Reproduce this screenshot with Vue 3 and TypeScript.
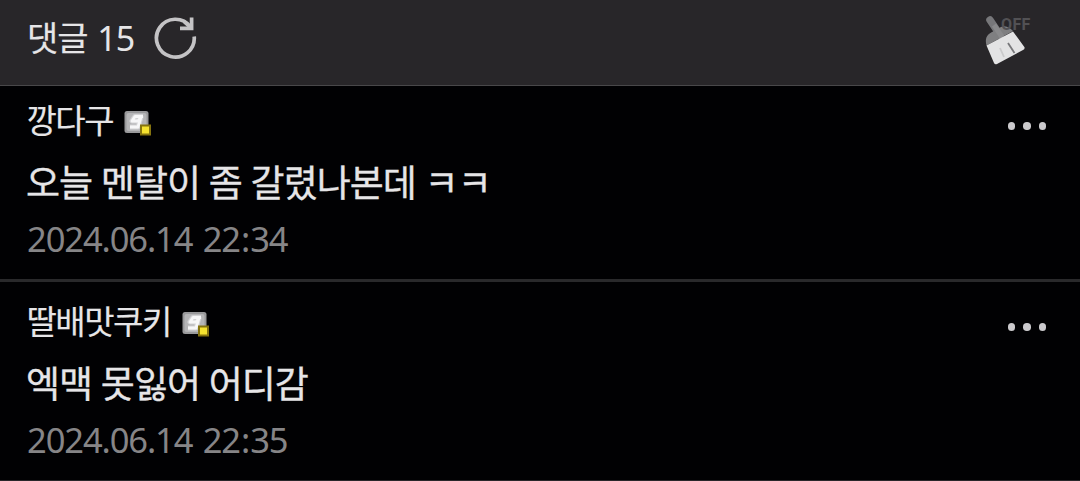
<script setup lang="ts">
interface Comment {
  id: number
  author: string
  text: string
  day: string
  hour: string
  minute: string
}

const comments: Comment[] = [
  { id: 1, author: '깡다구', text: '오늘 멘탈이 좀 갈렸나본데 ㅋㅋ', day: '2024.06.14', hour: '22', minute: '34' },
  { id: 2, author: '딸배맛쿠키', text: '엑맥 못잃어 어디감', day: '2024.06.14', hour: '22', minute: '35' },
]
</script>

<template>
  <main class="page">
    <header class="head">
      <h1 class="title">댓글 <span class="count">15</span></h1>
      <button class="icon-button refresh" aria-label="새로고침">
        <svg width="44" height="44" viewBox="0 0 44 44" fill="none" stroke="#c4c3c5" stroke-width="3.7">
          <path d="M40.2 20.5A18.9 18.9 0 1 1 36.5 10.8" />
          <path d="M37.6 1.5V12.4H26" />
          <path d="M30 5.5L37 12" />
        </svg>
      </button>
      <button class="icon-button clean" aria-label="클린">
        <svg width="52" height="54" viewBox="0 0 52 54">
          <path d="M8 9L18 24" stroke="#77777a" stroke-width="7.5" stroke-linecap="round" />
          <path d="M4.5 34.5C3 28 4 24 10 21L19 16C24 14 28 17 31 20Z" fill="#7f7f81" />
          <path d="M12 14L20 26" stroke="#89898b" stroke-width="5" />
          <path d="M4.5 34.5L31 20.5L42.5 36.2Q43 38 41 39L15 53Q13 54 12 52Z" fill="#e3e3e4" />
          <path d="M26 32L32.5 42" stroke="#77777a" stroke-width="1.8" />
          <path d="M18 37L22 46" stroke="#cacacb" stroke-width="1.8" />
          <text x="19" y="19" class="off">OFF</text>
        </svg>
      </button>
    </header>
    <article v-for="c in comments" :key="c.id" class="comment">
      <div class="body">
        <div class="author">
          <span>{{ c.author }}</span>
          <svg class="badge" width="30" height="28" viewBox="0 0 30 28">
            <rect x="1.5" y="2" width="24" height="22" rx="2.5" fill="#99999b" />
            <rect x="3.5" y="4" width="20" height="18" rx="2" fill="#b5b5b7" />
            <g fill="none" stroke-linejoin="round">
              <path d="M20 7.5H12L9 12H15L18 8L15 18H7" stroke="#d2d2d4" stroke-width="5" />
              <path d="M20 7.5H12L9 12H15L18 8L15 18H7" stroke="#f7f7f8" stroke-width="2.8" />
            </g>
            <rect x="17" y="15.5" width="11" height="11" fill="#85730f" />
            <rect x="19" y="17.5" width="7" height="7" fill="#f5e22f" />
          </svg>
        </div>
        <p class="text">{{ c.text }}</p>
        <time class="date">{{ c.day }} {{ c.hour }}<span class="colon">:</span>{{ c.minute }}</time>
      </div>
      <button class="icon-button more" aria-label="더보기">
        <i /><i /><i />
      </button>
    </article>
  </main>
</template>

<style>
body {
  margin: 0;
  background: #010103;
}
</style>

<style scoped>
.page {
  box-sizing: border-box;
  width: 1080px;
  height: 481px;
  overflow: hidden;
  background: #010103;
  border-bottom: 1px solid #29272a;
  color: #e6e5e7;
  font-family: "Noto Sans CJK KR", sans-serif;
}
.head {
  box-sizing: border-box;
  height: 86px;
  display: flex;
  align-items: flex-start;
  padding-left: 27px;
  background: #282629;
  border-bottom: 1px solid #49484a;
}
.title {
  margin: 17px 0 0;
  width: 127px;
  font-size: 34px;
  line-height: 40px;
  font-weight: 400;
  letter-spacing: -1px;
  word-spacing: 3px;
  white-space: nowrap;
  -webkit-text-stroke: 0.15px currentColor;
}
.count {
  font-family: "Noto Sans", sans-serif;
  -webkit-text-stroke: 0;
}
.icon-button {
  display: block;
  padding: 0;
  border: 0;
  background: none;
}
.icon-button svg {
  display: block;
}
.refresh {
  margin-top: 16px;
}
.clean {
  margin: 11px 46px 0 auto;
}
.off {
  font: bold 16px Roboto, sans-serif;
  letter-spacing: 0.4px;
  fill: #525154;
}
.comment {
  display: flex;
  justify-content: space-between;
  height: 193px;
  box-sizing: border-box;
  padding: 13px 34px 0 26px;
}
.comment + .comment {
  height: 201px;
  padding-top: 18px;
  border-top: 3px solid #29292b;
}
.author {
  display: flex;
  align-items: flex-start;
  height: 40px;
  padding-left: 0.5px;
  font-size: 33px;
  line-height: 40px;
  letter-spacing: -1.5px;
  -webkit-text-stroke: 0.15px currentColor;
}
.badge {
  margin: 10px 0 0 10px;
}
.text {
  margin: 17px 0 0;
  height: 50px;
  font-size: 37px;
  line-height: 50px;
  letter-spacing: -1px;
  word-spacing: 1.5px;
  white-space: nowrap;
  -webkit-text-stroke: 0.3px currentColor;
}
.date {
  display: block;
  margin: 13px 0 0 1px;
  height: 40px;
  color: #868587;
  font-family: "Noto Sans", sans-serif;
  font-size: 34.5px;
  line-height: 40px;
  letter-spacing: -1.1px;
  word-spacing: 2.5px;
}
.colon {
  margin: 0 1px;
}
.more {
  display: flex;
  gap: 8px;
  height: 7px;
  margin-top: 23px;
}
.more i {
  width: 7.5px;
  height: 7.5px;
  border-radius: 50%;
  background: #cbcacd;
}
</style>
